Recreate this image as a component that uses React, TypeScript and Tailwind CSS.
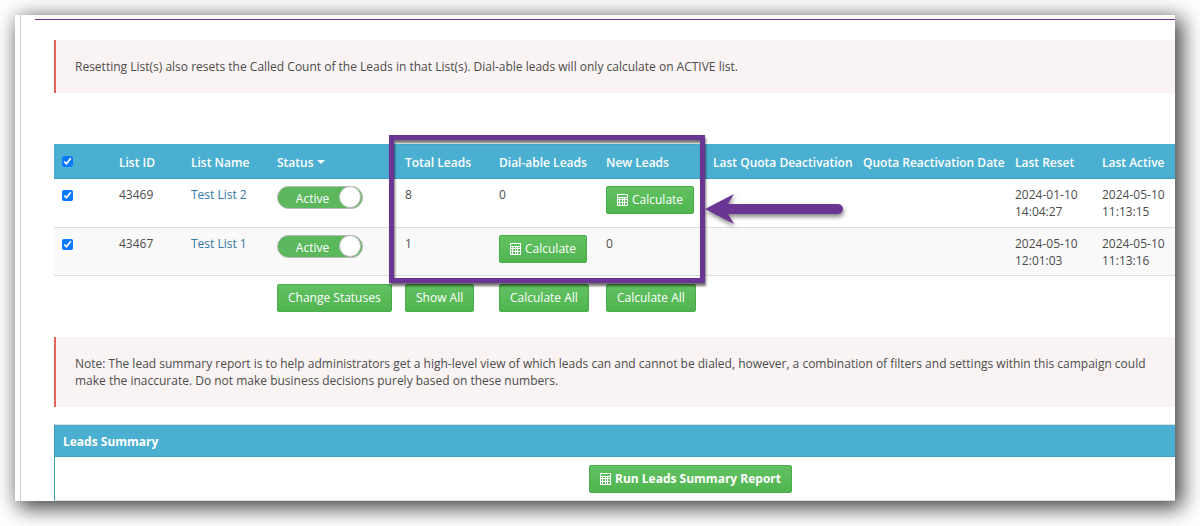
import { useState } from "react";
import type { ReactNode } from "react";
import clsx from "clsx";

interface LeadList {
  id: string;
  name: string;
  total: number;
  dialable: number | null;
  fresh: number | null;
  lastReset: [string, string];
  lastActive: [string, string];
}

const LISTS: LeadList[] = [
  {
    id: "43469",
    name: "Test List 2",
    total: 8,
    dialable: 0,
    fresh: null,
    lastReset: ["2024-01-10", "14:04:27"],
    lastActive: ["2024-05-10", "11:13:15"],
  },
  {
    id: "43467",
    name: "Test List 1",
    total: 1,
    dialable: null,
    fresh: 0,
    lastReset: ["2024-05-10", "12:01:03"],
    lastActive: ["2024-05-10", "11:13:16"],
  },
];

function CalculatorIcon() {
  return (
    <svg viewBox="0 0 11 12" className="h-3 w-[11px] shrink-0" aria-hidden="true">
      <path
        fill="currentColor"
        fillRule="evenodd"
        d="M0 0h11v12H0zM1 1v2h9V1zM1 4v1h1V4zM3 4v1h2V4zM6 4v1h1V4zM8 4v1h2V4zM1 6v2h1V6zM3 6v2h2V6zM6 6v2h1V6zM8 6v2h2V6zM1 9v2h1V9zM3 9v2h2V9zM6 9v2h1V9zM8 9v2h2V9z"
      />
    </svg>
  );
}

function GreenButton({ children, icon, bold }: { children: ReactNode; icon?: boolean; bold?: boolean }) {
  return (
    <button
      type="button"
      className={clsx(
        "inline-flex h-7 items-center gap-1 rounded-[2px] border border-[#49ad4a] bg-linear-to-b from-[#62c162] to-[#4fb54f] px-2.5 whitespace-nowrap text-white",
        bold && "font-bold",
      )}
    >
      {icon && <CalculatorIcon />}
      {children}
    </button>
  );
}

function StatusToggle({ label }: { label: string }) {
  const [on, setOn] = useState(true);

  return (
    <button
      type="button"
      role="switch"
      aria-checked={on}
      aria-label={`Status of ${label}`}
      onClick={() => setOn(!on)}
      className={clsx(
        "flex h-[23px] w-[86px] items-center rounded-full border border-[#b9b9b9] text-white",
        on ? "bg-[#5cb85c]" : "flex-row-reverse bg-[#d9534f]",
      )}
    >
      <span className="flex-1 pt-0.5 pl-2 text-center">{on ? "Active" : "Inactive"}</span>
      <span className="mr-px size-[22px] shrink-0 rounded-full border border-[#bdbdbd] bg-white" />
    </button>
  );
}

function Checkbox({ label }: { label: string }) {
  return (
    <input type="checkbox" defaultChecked aria-label={label} className="mt-1 block size-[11px] accent-[#0a78ff]" />
  );
}

function Notice({ children }: { children: ReactNode }) {
  return <p className="border-l-2 border-[#e4655c] bg-[#f9f3f3] py-[18px] pl-[19px]">{children}</p>;
}

function ListsTable() {
  return (
    <table className="w-full table-fixed border-collapse text-left [&_td]:px-2 [&_td]:pt-[7px] [&_td]:align-top [&_th]:px-2 [&_th]:pt-[3px] [&_th]:font-semibold [&_th]:whitespace-nowrap">
      <colgroup>
        <col className="w-[57px]" />
        <col className="w-[72px]" />
        <col className="w-[86px]" />
        <col className="w-[128px]" />
        <col className="w-[94px]" />
        <col className="w-[107px]" />
        <col className="w-[107px]" />
        <col className="w-[150px]" />
        <col className="w-[152px]" />
        <col className="w-[87px]" />
        <col />
      </colgroup>
      <thead>
        <tr className="h-[34px] border-b border-[#3ca0bf] bg-[#4bafd1] text-white">
          <th className="pb-1.5">
            <Checkbox label="Select all lists" />
          </th>
          <th>List ID</th>
          <th>List Name</th>
          <th>
            <button type="button" className="flex items-center gap-[3px] font-semibold">
              Status
              <svg viewBox="0 0 8 4" className="h-1 w-2" aria-hidden="true">
                <path d="M0 0h8L4 4z" fill="currentColor" />
              </svg>
            </button>
          </th>
          <th>Total Leads</th>
          <th>Dial-able Leads</th>
          <th>New Leads</th>
          <th>Last Quota Deactivation</th>
          <th>Quota Reactivation Date</th>
          <th>Last Reset</th>
          <th>Last Active</th>
        </tr>
      </thead>
      <tbody>
        {LISTS.map((list) => (
          <tr key={list.id} className="h-[49px] border-b border-[#dddddd] even:h-12 even:bg-[#f9f9f9]">
            <td>
              <Checkbox label={`Select ${list.name}`} />
            </td>
            <td>{list.id}</td>
            <td>
              <a href="#list" className="text-[#3277a4]">
                {list.name}
              </a>
            </td>
            <td>
              <StatusToggle label={list.name} />
            </td>
            <td>{list.total}</td>
            <td>{list.dialable ?? <GreenButton icon>Calculate</GreenButton>}</td>
            <td>{list.fresh ?? <GreenButton icon>Calculate</GreenButton>}</td>
            <td />
            <td />
            <td>
              {list.lastReset[0]}
              <br />
              {list.lastReset[1]}
            </td>
            <td>
              {list.lastActive[0]}
              <br />
              {list.lastActive[1]}
            </td>
          </tr>
        ))}
      </tbody>
      <tfoot>
        <tr className="h-9 [&>td]:pt-2">
          <td colSpan={3} />
          <td>
            <GreenButton>Change Statuses</GreenButton>
          </td>
          <td>
            <GreenButton>Show All</GreenButton>
          </td>
          <td>
            <GreenButton>Calculate All</GreenButton>
          </td>
          <td>
            <GreenButton>Calculate All</GreenButton>
          </td>
          <td colSpan={4} />
        </tr>
      </tfoot>
    </table>
  );
}

// Purple frame round the lead columns, with an arrow pointing at it
function Callout() {
  return (
    <div className="pointer-events-none absolute -top-[9px] left-[335px] h-[148px] w-[316px]">
      <div className="size-full border-5 border-[#6b3593] drop-shadow-[1px_3px_1px_rgba(0,0,0,0.55)]" />
      <svg
        viewBox="0 0 140 32"
        className="absolute top-[58px] left-full h-8 w-[140px] overflow-visible drop-shadow-[1px_3px_2px_rgba(0,0,0,0.45)]"
        aria-hidden="true"
      >
        <path d="M0 16 29 1 23 11H133a5 5 0 0 1 0 10H23L29 31Z" fill="#6b3593" />
      </svg>
    </div>
  );
}

export default function App() {
  return (
    <main className="min-h-screen overflow-hidden bg-white pt-[15px] pr-[25px] pb-[25px] pl-[15px] font-['Open_Sans','Noto_Sans',sans-serif] text-[12px] leading-[17px] text-[#4c4c4c]">
      <div className="bg-white pl-[5px] shadow-[5px_5px_20px_2px_rgba(0,0,0,0.75)]">
        <div className="border-l border-[#cccccc] pl-3.5">
          <div className="h-[5px] border-b border-[#6b3593] bg-[#fafafb]" />

          <div className="pt-5 pl-[19px]">
            <Notice>
              Resetting List(s) also resets the Called Count of the Leads in that List(s). Dial-able leads will only
              calculate on ACTIVE list.
            </Notice>

            <section className="relative mt-[51px] mb-[25px]">
              <ListsTable />
              <Callout />
            </section>

            <Notice>
              Note: The lead summary report is to help administrators get a high-level view of which leads can and
              cannot be dialed, however, a combination of filters and settings within this campaign could make the
              inaccurate. Do not make business decisions purely based on these numbers.
            </Notice>

            <section className="mt-[17px] overflow-hidden border-y border-l border-y-[#dddddd] border-l-[#3ca0bf]">
              <h2 className="border-b border-[#3ca0bf] bg-[#4bafd1] px-2 pt-2 pb-1.5 font-bold text-white">
                Leads Summary
              </h2>
              <div className="-mr-[151px] flex justify-center pt-2 pb-[7px]">
                <GreenButton icon bold>
                  Run Leads Summary Report
                </GreenButton>
              </div>
            </section>
          </div>
        </div>
      </div>
    </main>
  );
}
